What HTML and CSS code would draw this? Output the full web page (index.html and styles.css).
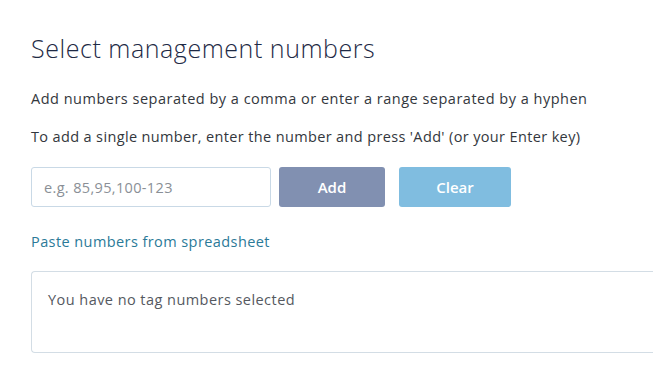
FILE: index.html
```html
<!DOCTYPE html>
<html lang="en">
<head>
<meta charset="utf-8">
<title>Select management numbers</title>
<link rel="stylesheet" href="styles.css">
</head>
<body>
<main class="page">
  <h1 class="title">Select management numbers</h1>
  <p class="help">Add numbers separated by a comma or enter a range separated by a hyphen</p>
  <p class="help help-second">To add a single number, enter the number and press 'Add' (or your Enter key)</p>
  <div class="entry">
    <input class="entry-input" type="text" placeholder="e.g. 85,95,100-123">
    <button class="btn btn-add" type="button">Add</button>
    <button class="btn btn-clear" type="button">Clear</button>
  </div>
  <a class="paste-link" href="#">Paste numbers from spreadsheet</a>
  <div class="selected-box">
    <p class="selected-empty">You have no tag numbers selected</p>
  </div>
</main>
</body>
</html>
```

FILE: styles.css
```css
html, body {
  margin: 0;
  padding: 0;
  background: #ffffff;
}
body {
  font-family: "Open Sans", Lato, sans-serif;
  color: #2e3138;
  overflow: hidden;
}
.page {
  padding: 31px 0 0 31px;
}
.title {
  margin: 0;
  font-size: 25px;
  font-weight: 300;
  color: #1e2a45;
  line-height: 34px;
  letter-spacing: 0.55px;
}
.help {
  margin: 24px 0 0;
  font-size: 14.5px;
  line-height: 20px;
  color: #33373d;
  letter-spacing: 0.5px;
}
.help-second {
  margin-top: 18px;
  letter-spacing: 0.36px;
}
.entry {
  display: flex;
  margin-top: 20px;
  height: 40px;
}
.entry-input {
  box-sizing: border-box;
  width: 240px;
  height: 40px;
  border: 1px solid #c9d9e6;
  border-radius: 3px;
  padding: 0 12px;
  font-family: inherit;
  font-size: 14.5px;
  letter-spacing: 0.35px;
  color: #333;
  outline: none;
}
.entry-input::placeholder {
  color: #8a8f96;
}
.btn {
  border: none;
  border-radius: 3px;
  height: 40px;
  color: #ffffff;
  font-family: inherit;
  font-size: 15px;
  font-weight: 600;
}
.btn-add {
  width: 106px;
  margin-left: 8px;
  background: #8190b1;
}
.btn-clear {
  width: 112px;
  margin-left: 14px;
  background: #80bde0;
}
.paste-link {
  display: block;
  margin-top: 25px;
  font-size: 14.5px;
  line-height: 20px;
  letter-spacing: 0.42px;
  color: #2b7a98;
  text-decoration: none;
}
.selected-box {
  box-sizing: border-box;
  margin-top: 19px;
  height: 82px;
  border: 1px solid #d3dde5;
  border-right: none;
  border-radius: 4px 0 0 4px;
  padding: 18px 16px;
}
.selected-empty {
  margin: 0;
  font-size: 14.5px;
  line-height: 20px;
  letter-spacing: 0.45px;
  color: #55595f;
}
```
